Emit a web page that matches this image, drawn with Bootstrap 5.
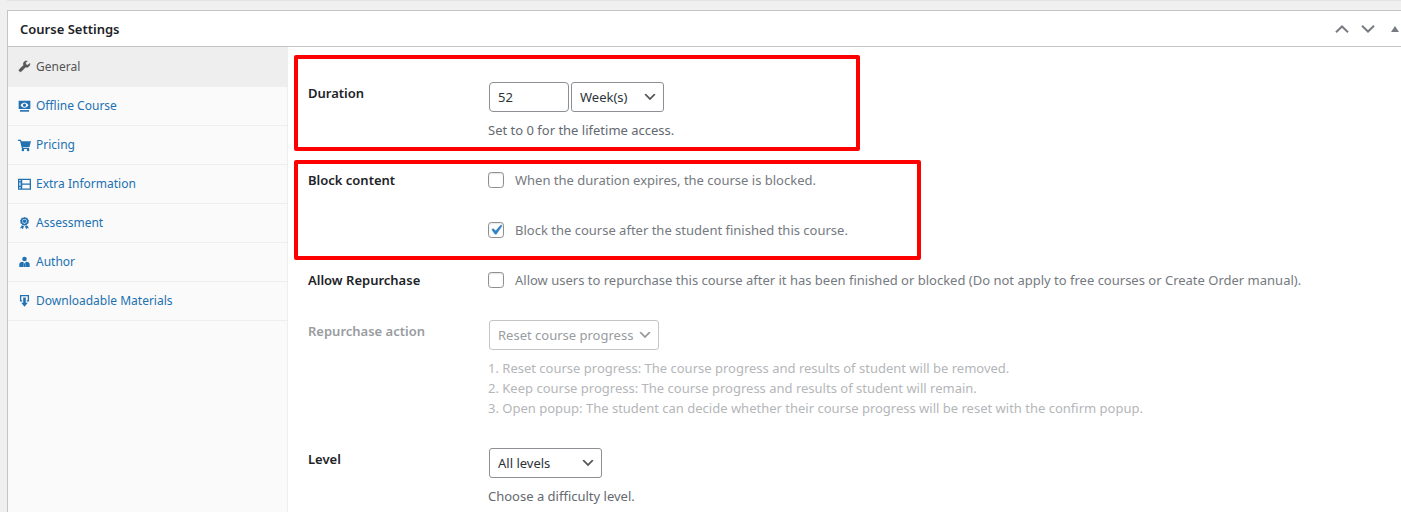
<!DOCTYPE html>
<html lang="en">
<head>
<meta charset="utf-8">
<meta name="viewport" content="width=device-width, initial-scale=1">
<title>Course Settings</title>
<link rel="stylesheet" href="https://cdn.jsdelivr.net/npm/bootstrap@5.3.0/dist/css/bootstrap.min.css">
<style>
  body { background: #f0f0f1; color: #2c3338; font: 13px/20px "Noto Sans", "Open Sans", sans-serif; overflow: hidden; }
  .page { padding-left: 7px; }
  .previous-edge { height: 1px; background: #e4e4e6; margin-bottom: 9px; }
  .postbox { background: #fff; border: 1px solid #c3c4c7; border-right: 0; min-height: 520px; }
  .postbox-header { height: 36px; border-bottom: 1px solid #c3c4c7; padding: 0 2px 0 12px; }
  .postbox-header h2 { font-size: 13px; line-height: 20px; font-weight: 600; color: #1d2327; }
  .handle { border: 0; background: none; padding: 0; width: 26px; height: 34px; color: #787c82; display: flex; align-items: center; justify-content: center; }
  .handle-last { width: 18px; justify-content: flex-end; }
  .tabs-col { width: 280px; flex: none; background: #fafafa; border-right: 1px solid #eee; }
  .tabs-col a { display: flex; align-items: center; gap: 5px; height: 39px; padding: 0 10px; border-bottom: 1px solid #eee; color: #2271b1; font-size: 12px; text-decoration: none; }
  .tabs-col a.active { height: 40px; background: #eee; color: #555; margin-right: -1px; }
  .tabs-col svg { width: 13px; height: 13px; flex: none; fill: currentColor; }
  .fields { padding: 8px 0 0 6px; }
  .marked { border: 4px solid #f00; border-radius: 2px; padding: 0 0 0 10px; }
  .marked-duration { max-width: 566px; padding-top: 23px; padding-bottom: 7px; margin-bottom: 9px; }
  .marked-block { max-width: 627px; padding-top: 6px; padding-bottom: 16px; margin-bottom: 10px; }
  .plain { padding-left: 14px; margin-bottom: 30px; }
  .field-name { width: 180px; flex: none; font-weight: 600; color: #1d2327; }
  .control-name { padding-top: 1px; }
  .hint { margin-top: 8px; color: #646970; }
  .wp-input { height: 30px; margin-left: 1px; padding: 0 8px; font-size: 13px; line-height: 20px; color: #2c3338; border: 1px solid #8c8f94; border-radius: 4px; }
  .weeks { width: 80px; }
  .unit { width: 93px; margin-left: 2px; }
  .action { width: 170px; }
  .level { width: 113px; }
  select.wp-input { border-radius: 3px; background-position: right 5px center; background-size: 16px 16px; background-image: url("data:image/svg+xml,%3Csvg xmlns='http://www.w3.org/2000/svg' viewBox='0 0 20 20'%3E%3Cpath d='M5 6l5 5 5-5 2 1-7 7-7-7 2-1z' fill='%23555'/%3E%3C/svg%3E"); }
  .tick { width: 16px; height: 16px; margin: 2px 11px 2px 0; border: 1px solid #8c8f94; border-radius: 4px; flex: none; box-shadow: inset 0 1px 2px rgba(0,0,0,.1); }
  .form-check-input.tick:checked { background-color: #fff; border-color: #8c8f94; background-size: 20px 20px; background-image: url("data:image/svg+xml,%3Csvg xmlns='http://www.w3.org/2000/svg' viewBox='0 0 20 20'%3E%3Cpath d='M14.83 4.89l1.34.94-5.81 8.38H9.02L5.78 9.67l1.34-1.25 2.57 2.4z' fill='%233582c4' stroke='%233582c4' stroke-width='.4'/%3E%3C/svg%3E"); }
  .tick-label { color: #757a80; }
  .second { margin-top: 30px; }
  .dimmed .field-name { color: #999c9f; }
  .dimmed .wp-input { color: #999c9f; border-color: #c3c5c8; background-color: #fff; opacity: 1; background-image: url("data:image/svg+xml,%3Csvg xmlns='http://www.w3.org/2000/svg' viewBox='0 0 20 20'%3E%3Cpath d='M5 6l5 5 5-5 2 1-7 7-7-7 2-1z' fill='%23999'/%3E%3C/svg%3E"); }
  .dimmed .hint { color: #b4b6b9; }
</style>
</head>
<body>
<main class="page">
  <div class="previous-edge"></div>
  <section class="postbox">
    <header class="postbox-header d-flex align-items-center justify-content-between">
      <h2 class="m-0">Course Settings</h2>
      <div class="d-flex">
        <button class="handle" type="button" aria-label="Move up"><svg width="14" height="8" viewBox="0 0 14 8" fill="none" stroke="currentColor" stroke-width="2"><path d="M1 7.2l6-5.7 6 5.7"/></svg></button>
        <button class="handle" type="button" aria-label="Move down"><svg width="14" height="8" viewBox="0 0 14 8" fill="none" stroke="currentColor" stroke-width="2"><path d="M1 .8l6 5.7 6-5.7"/></svg></button>
        <button class="handle handle-last" type="button" aria-label="Toggle panel"><svg width="8" height="6" viewBox="0 0 8 6" fill="currentColor"><path d="M4 0l4 6H0z"/></svg></button>
      </div>
    </header>
    <div class="d-flex">
      <nav class="tabs-col" aria-label="Course settings">
        <a class="active" href="#general"><svg viewBox="0 0 20 20"><path d="M16.7 9.8c-1.4 1.4-3.4 1.7-5.1 1L5.300 17.200a2.100 2.100 0 0 1-3 0 2.100 2.100 0 0 1 0-3l6.400-6.300c-.7-1.700-.4-3.700 1-5.100A4.800 4.800 0 0 1 14.300 1.600L11.600 4.300l.5 3.100 3.100.5 2.700-2.700c.6 1.600.2 3.300-1.200 4.600z" stroke="currentColor"/></svg>General</a>
        <a href="#offline"><svg viewBox="0 0 20 20"><path fill-rule="evenodd" d="M1 1h18v13H1zM10 4C6.500 4 4 8 4 8s2.500 4 6 4 6-4 6-4-2.500-4-6-4zm0 1.500a2.500 2.500 0 1 1 0 5 2.500 2.500 0 0 1 0-5z"/><circle cx="10" cy="8" r="1.200"/><path d="M3 15.500h14V18H3z"/></svg>Offline Course</a>
        <a href="#pricing"><svg viewBox="0 0 20 20"><path d="M0 1h4.500l.8 2.500H20l-2.500 9H7.400l.4 1.300H17v1.700H6.200L3.200 3H0z"/><circle cx="7.500" cy="17" r="2"/><circle cx="15.500" cy="17" r="2"/></svg>Pricing</a>
        <a href="#extra"><svg viewBox="0 0 20 20"><path fill-rule="evenodd" d="M0 1h20v17H0zM2 3v2h2V3zm0 4v5h2V7zm0 7v2h2v-2zM6.500 3v5.500H18V3zm0 7.500V16H18v-5.500z"/></svg>Extra Information</a>
        <a href="#assessment"><svg viewBox="0 0 20 20"><path fill-rule="evenodd" d="M10 0l2 1 2.300.2.900 2.100 1.600 1.700-.6 2.200.1 2.300-2 1.200-1.400 1.800-2.900.4-2.900-.4-1.400-1.800-2-1.200.1-2.300L3.200 5l1.600-1.700.9-2.100L8 1zM10 3a3.600 3.600 0 1 0 0 7.200A3.600 3.600 0 0 0 10 3z"/><circle cx="10" cy="6.600" r="2.700"/><path d="M6 12.500l3.200 1.700L7.500 19l-1.900-2-2.600.5zM14 12.500l-3.200 1.700 1.700 4.800 1.900-2 2.600.5z"/></svg>Assessment</a>
        <a href="#author"><svg viewBox="0 0 20 20"><circle cx="10" cy="4.500" r="3.500"/><path d="M2 17v-4.500c0-2.200 2-3.600 5.500-3.800L9 10.500 8.300 17zM18 17v-4.500c0-2.200-2-3.600-5.500-3.800L11 10.500l.7 6.500zM9.300 11h1.400l.6 6H8.700z"/></svg>Author</a>
        <a href="#materials"><svg viewBox="0 0 20 20"><path d="M3 0h14v10h-3.500V8H15V2H5v6h1.500v2H3z"/><path d="M8 4h4v8h3l-5 6-5-6h3z"/></svg>Downloadable Materials</a>
      </nav>
      <form class="fields flex-grow-1">
        <div class="marked marked-duration d-flex">
          <label class="field-name control-name" for="duration">Duration</label>
          <div>
            <div class="d-flex">
              <input class="form-control wp-input weeks" id="duration" type="text" value="52">
              <select class="form-select wp-input unit" aria-label="Duration unit"><option>Week(s)</option></select>
            </div>
            <div class="hint">Set to 0 for the lifetime access.</div>
          </div>
        </div>
        <div class="marked marked-block d-flex">
          <div class="field-name">Block content</div>
          <div>
            <label class="tick-label d-flex"><input class="form-check-input tick" type="checkbox">When the duration expires, the course is blocked.</label>
            <label class="tick-label d-flex second"><input class="form-check-input tick" type="checkbox" checked>Block the course after the student finished this course.</label>
          </div>
        </div>
        <div class="plain d-flex">
          <div class="field-name">Allow Repurchase</div>
          <label class="tick-label d-flex"><input class="form-check-input tick" type="checkbox">Allow users to repurchase this course after it has been finished or blocked (Do not apply to free courses or Create Order manual).</label>
        </div>
        <div class="plain dimmed d-flex">
          <label class="field-name control-name" for="action">Repurchase action</label>
          <div>
            <select class="form-select wp-input action" id="action" disabled><option>Reset course progress</option></select>
            <div class="hint">1. Reset course progress: The course progress and results of student will be removed.<br>2. Keep course progress: The course progress and results of student will remain.<br>3. Open popup: The student can decide whether their course progress will be reset with the confirm popup.</div>
          </div>
        </div>
        <div class="plain d-flex">
          <label class="field-name control-name" for="level">Level</label>
          <div>
            <select class="form-select wp-input level" id="level"><option>All levels</option></select>
            <div class="hint">Choose a difficulty level.</div>
          </div>
        </div>
      </form>
    </div>
  </section>
</main>
<script src="https://cdn.jsdelivr.net/npm/bootstrap@5.3.0/dist/js/bootstrap.bundle.min.js"></script>
</body>
</html>
